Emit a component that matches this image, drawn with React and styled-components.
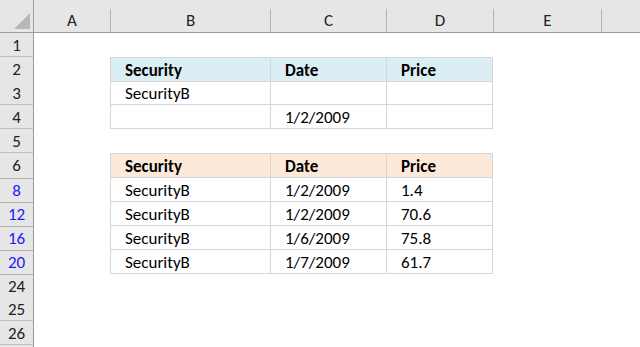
import React from "react";
import styled, { createGlobalStyle } from "styled-components";

const GlobalStyle = createGlobalStyle`
  html, body {
    margin: 0;
    padding: 0;
    background: #ffffff;
  }
  body {
    font-family: Carlito, Lato, "Open Sans", sans-serif;
    color: #000;
  }
`;

const COLS = "34px 76px 160px 116px 107px 108px 1fr";

const Sheet = styled.div`
  width: 640px;
  height: 347px;
  overflow: hidden;
  background: #fff;
`;

const HeaderBar = styled.div`
  display: grid;
  grid-template-columns: ${COLS};
  height: 33px;
  padding-top: 9px;
  box-sizing: border-box;
  background: #e6e6e6;
  border-bottom: 1px solid #9c9c9c;
`;

const Corner = styled.div`
  position: relative;
  border-right: 1px solid #9c9c9c;
  margin-top: -9px;
`;

const Triangle = styled.div`
  position: absolute;
  left: 14px;
  top: 13px;
  width: 0;
  height: 0;
  border-style: solid;
  border-width: 0 0 16px 16px;
  border-color: transparent transparent #b7b7b7 transparent;
`;

const ColHead = styled.div`
  display: flex;
  align-items: center;
  justify-content: center;
  font-size: 17px;
  color: #222;
  border-left: ${(p) => (p.$first ? "none" : "1px solid #b5b5b5")};
  padding-bottom: 1px;
`;

const Row = styled.div`
  display: grid;
  grid-template-columns: ${COLS};
  height: 24px;
`;

const RowHead = styled.div`
  display: flex;
  align-items: center;
  justify-content: center;
  box-sizing: border-box;
  background: ${(p) =>
    p.$hidden
      ? "linear-gradient(#e6e6e6 0 1px, #b0b0b0 1px 2px, #e6e6e6 2px)"
      : "#e6e6e6"};
  border-right: 1px solid #9c9c9c;
  border-bottom: 1px solid #bcbcbc;
  font-size: 17px;
  color: ${(p) => (p.$filtered ? "#1a1aff" : "#222")};
  padding-top: ${(p) => (p.$hidden ? "3px" : "1px")};
`;

const Cell = styled.div`
  display: flex;
  align-items: center;
  box-sizing: border-box;
  padding: 2px 0 0 14px;
  font-size: 17px;
  font-weight: ${(p) => (p.$bold ? 700 : 400)};
  background: ${(p) => p.$bg || "transparent"};
  border-left: ${(p) => (p.$grid ? "1px solid #d6d6d6" : "none")};
  border-right: ${(p) => (p.$grid && p.$last ? "1px solid #d6d6d6" : "none")};
  border-top: ${(p) => (p.$grid && p.$top ? "1px solid #d6d6d6" : "none")};
  border-bottom: ${(p) => (p.$grid ? "1px solid #d6d6d6" : "none")};
  white-space: nowrap;
`;

const Blank = styled.div``;

const BLUE = "#daeef3";
const PEACH = "#fde9d9";

const rows = [
  { n: 1 },
  { n: 2, cells: ["Security", "Date", "Price"], head: BLUE, top: true },
  { n: 3, cells: ["SecurityB", "", ""] },
  { n: 4, cells: ["", "1/2/2009", ""] },
  { n: 5 },
  { n: 6, cells: ["Security", "Date", "Price"], head: PEACH, top: true },
  { n: 8, cells: ["SecurityB", "1/2/2009", "1.4"], filtered: true, hidden: true },
  { n: 12, cells: ["SecurityB", "1/2/2009", "70.6"], filtered: true, hidden: true },
  { n: 16, cells: ["SecurityB", "1/6/2009", "75.8"], filtered: true, hidden: true },
  { n: 20, cells: ["SecurityB", "1/7/2009", "61.7"], filtered: true, hidden: true },
  { n: 24, hidden: true },
  { n: 25 },
  { n: 26 },
  { n: "", key: 27 },
];

export default function App() {
  return (
    <Sheet>
      <GlobalStyle />
      <HeaderBar>
        <Corner>
          <Triangle />
        </Corner>
        {["A", "B", "C", "D", "E", ""].map((c, i) => (
          <ColHead key={i} $first={i === 0}>
            {c}
          </ColHead>
        ))}
      </HeaderBar>
      {rows.map((r) => (
        <Row key={r.key || r.n}>
          <RowHead $filtered={r.filtered} $hidden={r.hidden}>
            {r.n}
          </RowHead>
          <Blank />
          {r.cells ? (
            r.cells.map((t, i) => (
              <Cell
                key={i}
                $grid
                $top={r.top}
                $last={i === 2}
                $bold={!!r.head}
                $bg={r.head}
              >
                {t}
              </Cell>
            ))
          ) : (
            <>
              <Blank />
              <Blank />
              <Blank />
            </>
          )}
          <Blank />
          <Blank />
        </Row>
      ))}
    </Sheet>
  );
}
